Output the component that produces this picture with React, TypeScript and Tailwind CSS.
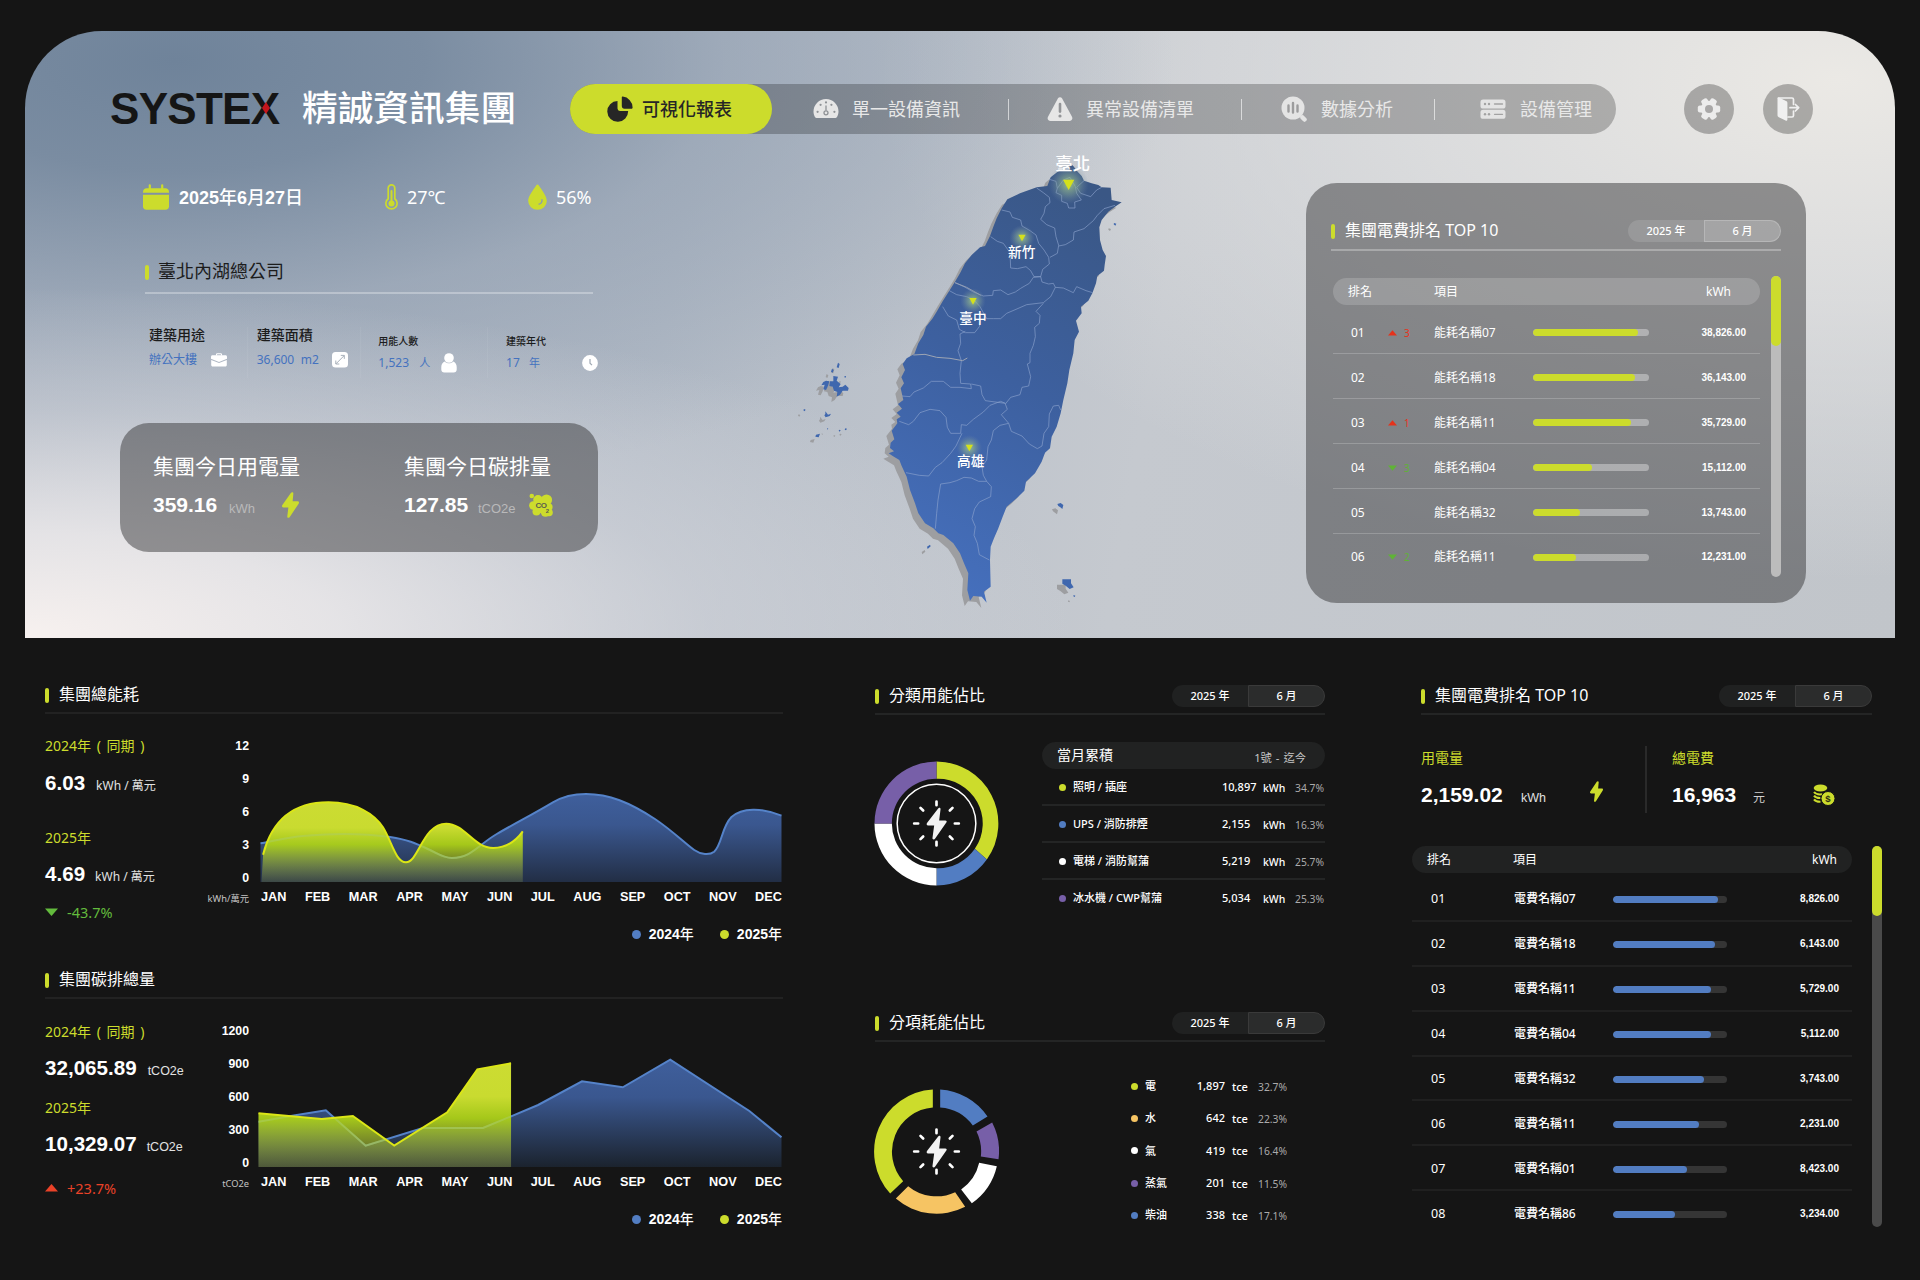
import React from "react";

const NOTO = "font-['Noto_Sans','Noto_Sans_CJK_TC',sans-serif]";
const ARIAL = "font-['Liberation_Sans','Noto_Sans_CJK_TC',sans-serif]";

/* ---------- icons ---------- */

function PieIcon() {
  return (
    <svg width="26" height="26" viewBox="0 0 26 26" fill="#262626">
      <path d="M10.5 5v7.6a2.4 2.4 0 0 0 2.4 2.4h8.2A10.4 10.4 0 1 1 10.5 5Z" />
      <path d="M15.8.6A11 11 0 0 1 25.6 11.4c0 .9-.5 1.3-1.3 1.3h-6.9c-1.6 0-2.6-1-2.6-2.6V1.6c0-.6.4-1 1-1Z" />
    </svg>
  );
}

function GaugeIcon() {
  return (
    <svg width="26" height="26" viewBox="0 0 26 26" fill="#e6e6e6">
      <path d="M3.4 22C1.6 22 .5 17.6.5 15.500a12.500 12.500 0 0 1 25 0c0 2.100-1.100 6.500-2.900 6.500Z" />
      <g fill="#8f9296">
        <circle cx="13" cy="6.400" r="1.100" />
        <circle cx="7.600" cy="8.800" r="1.100" />
        <circle cx="18.400" cy="8.800" r="1.100" />
        <circle cx="4.600" cy="15.800" r="1.100" />
        <circle cx="21.400" cy="15.800" r="1.100" />
      </g>
      <path d="M13 9.500v5" stroke="#8f9296" strokeWidth="1.300" />
      <circle cx="13" cy="16.800" r="2" fill="none" stroke="#8f9296" strokeWidth="1.300" />
    </svg>
  );
}

function WarningIcon() {
  return (
    <svg width="26" height="26" viewBox="0 0 26 26">
      <path
        d="M11 2.300 1 20.800c-1 1.900.2 4.200 2.300 4.200h19.400c2.100 0 3.300-2.300 2.300-4.200L15 2.300a2.300 2.300 0 0 0-4 0Z"
        fill="#e6e6e6"
      />
      <path d="M13 8v7.600" stroke="#929497" strokeWidth="2.600" strokeLinecap="round" />
      <circle cx="13" cy="20" r="1.600" fill="#929497" />
    </svg>
  );
}

function AnalysisIcon() {
  return (
    <svg width="26" height="26" viewBox="0 0 26 26">
      <circle cx="12" cy="12" r="11.500" fill="#e4e4e4" />
      <path d="m21.500 21.500 2 2" stroke="#e4e4e4" strokeWidth="4.500" strokeLinecap="round" />
      <path d="M7.500 9.500v6M12 7v9.500M16.500 9.500v6" stroke="#9c9c9d" strokeWidth="2.400" strokeLinecap="round" />
    </svg>
  );
}

function ServerIcon() {
  return (
    <svg width="26" height="26" viewBox="0 0 26 26">
      <rect x=".5" y="3.500" width="25" height="9" rx="2.600" fill="#e4e4e4" />
      <rect x=".5" y="13.800" width="25" height="9" rx="2.600" fill="#e4e4e4" />
      <g fill="#a2a2a2">
        <circle cx="5" cy="8" r="1.200" />
        <circle cx="9" cy="8" r="1.200" />
        <circle cx="5" cy="18.300" r="1.200" />
        <circle cx="9" cy="18.300" r="1.200" />
      </g>
      <path d="M14.500 8h8M14.500 18.300h8" stroke="#a2a2a2" strokeWidth="1.300" strokeLinecap="round" />
    </svg>
  );
}

function GearIcon() {
  return (
    <svg width="24" height="24" viewBox="-12 -12 24 24">
      <g fill="#ececec">
        <circle r="8.200" />
        {[0, 60, 120].map((a) => (
          <rect key={a} x="-11.200" y="-3.400" width="22.400" height="6.800" rx="2" transform={`rotate(${a})`} />
        ))}
      </g>
      <circle r="4" fill="#a9a8a8" />
    </svg>
  );
}

function ExitIcon() {
  return (
    <svg width="24" height="26" viewBox="0 0 24 26" fill="none" stroke="#f0f0f0" strokeLinejoin="round" strokeLinecap="round">
      <path d="M2.500 2h13.500c.9 0 1.500.6 1.500 1.500v5M17.500 15v4.500c0 .9-.6 1.500-1.500 1.500h-4" strokeWidth="1.700" />
      <path d="M1.500 2.500c0-.8.700-1.300 1.500-.9L10 5c.9.4 1.400 1.100 1.400 2v16.500c0 1-.9 1.600-1.800 1.100L2.800 21.200c-.8-.4-1.300-1-1.300-1.900Z" fill="#f0f0f0" strokeWidth="0" />
      <path d="M14 11.700h8.500M19.400 8.500l3.300 3.200-3.300 3.300" strokeWidth="1.700" />
    </svg>
  );
}

function CalendarIcon() {
  return (
    <svg width="26" height="26" viewBox="0 0 26 26" fill="#ccdc2c">
      <path d="M0 8.200C0 5.600 1.400 4.200 4 4.200h18c2.600 0 4 1.400 4 4v.6H0Z" />
      <path d="M0 10.800h26v11.400c0 2.200-1.200 3.600-3.600 3.600H3.600C1.200 25.800 0 24.400 0 22.200Z" />
      <path d="M6.800 1.300v4M19.200 1.300v4" stroke="#ccdc2c" strokeWidth="2.200" strokeLinecap="round" />
    </svg>
  );
}

function ThermoIcon() {
  return (
    <svg width="13" height="26" viewBox="0 0 13 26" fill="none" stroke="#ccdc2c">
      <path d="M3.200 14.800V4.200a3.300 3.300 0 0 1 6.600 0v10.600a5.600 5.600 0 1 1-6.600 0Z" strokeWidth="1.700" />
      <path d="M6.500 7v11" strokeWidth="2" strokeLinecap="round" />
      <circle cx="6.500" cy="19.400" r="3" fill="#ccdc2c" stroke="none" />
    </svg>
  );
}

function DropIcon() {
  return (
    <svg width="19" height="26" viewBox="0 0 19 26">
      <path d="M9.500.5c.5 0 .8.3 1 .6C14.500 7 18.800 12.500 18.800 17a9.300 8.700 0 0 1-18.600 0C.2 12.500 4.500 7 8.500 1.100c.2-.3.5-.6 1-.6Z" fill="#ccdc2c" />
      <path d="M14 15.600c.2 2.200-.8 4-3 4.600" fill="none" stroke="#8b9bb0" strokeWidth="1.300" strokeLinecap="round" />
    </svg>
  );
}

function BoltIcon({ w, h }: { w: number; h: number }) {
  return (
    <svg width={w} height={h} viewBox="0 0 48 76" fill="#ccdc2c" preserveAspectRatio="none">
      <path d="M25 3C27-1 33 0 32 5L30 27H44C48 27 49 31 47 34L22 73C19 77 14 76 15 71L18 45H4C0 45-1 41 1 38Z" />
    </svg>
  );
}

function Co2Icon() {
  return (
    <svg width="24" height="25" viewBox="0 0 24 25">
      <g fill="#ccdc2c">
        <circle cx="2.800" cy="3" r="2.300" />
        <circle cx="9" cy="6.800" r="4.800" />
        <circle cx="17.500" cy="7" r="5.600" />
        <circle cx="4.300" cy="12.500" r="4.200" />
        <circle cx="19.800" cy="14" r="3.800" />
        <circle cx="7.500" cy="18.500" r="4" />
        <circle cx="16.500" cy="19" r="4.800" />
        <circle cx="20" cy="19.500" r="3.800" />
        <rect x="6" y="6" width="14" height="14" />
      </g>
      <text x="6.400" y="15.200" fontSize="8" fontWeight="700" fill="#5b5e4c" className={ARIAL} textLength="11.500">CO</text>
      <text x="16.800" y="19.800" fontSize="6" fontWeight="700" fill="#5b5e4c" className={ARIAL}>2</text>
    </svg>
  );
}

function BriefcaseIcon() {
  return (
    <svg width="16" height="14" viewBox="0 0 16 14">
      <path d="M5.500 2.500V1.600c0-.5.300-.8.800-.8h3.400c.5 0 .8.300.8.800v.9" fill="none" stroke="#fff" strokeWidth="1.100" />
      <path d="M1.500 2.300h13c.9 0 1.500.6 1.500 1.500v1.900L8 9 0 5.700V3.800c0-.9.600-1.500 1.500-1.500Z" fill="#fff" />
      <path d="M.2 7 8 10.100 15.800 7v5c0 .9-.6 1.500-1.500 1.500H1.700c-.9 0-1.500-.6-1.500-1.500Z" fill="#fff" />
    </svg>
  );
}

function AreaIcon() {
  return (
    <svg width="16" height="16" viewBox="0 0 16 16">
      <rect width="16" height="15.500" rx="3.500" fill="#fff" />
      <path d="m4 11.800 8.200-8.200M8.800 3.400h3.500v3.500M3.800 8.500V12h3.500" fill="none" stroke="#9fa8b3" strokeWidth=".9" />
    </svg>
  );
}

function PersonIcon() {
  return (
    <svg width="16" height="20" viewBox="0 0 16 20" fill="#fff">
      <circle cx="8" cy="5" r="4.800" />
      <path d="M3.500 8.500C1.500 9.500.3 11.500.3 14v2.500c0 1.700 1.200 3 3 3h9.400c1.800 0 3-1.300 3-3V14c0-2.500-1.200-4.500-3.200-5.500-2.400 2.400-6.600 2.400-9 0Z" />
    </svg>
  );
}

function ClockIcon() {
  return (
    <svg width="16" height="16" viewBox="0 0 16 16">
      <circle cx="8" cy="8" r="7.900" fill="#fff" />
      <path d="M8 4v4.200l2 2" fill="none" stroke="#9fa8b3" strokeWidth="1.200" />
    </svg>
  );
}

function CoinsIcon() {
  return (
    <svg width="22" height="22" viewBox="0 0 22 22">
      <ellipse cx="7.500" cy="4" rx="6.800" ry="3.500" fill="#ccdc2c" />
      <g fill="none" stroke="#ccdc2c" strokeWidth="2">
        <path d="M1 8c1.500 2 4.500 2.700 8 2.300" />
        <path d="M1 11.700c1.200 1.700 3.500 2.500 6.500 2.400" />
        <path d="M1 15.300c1.200 1.700 3.500 2.500 6.500 2.400" />
      </g>
      <circle cx="15" cy="14.500" r="7" fill="#ccdc2c" stroke="#151515" strokeWidth="1" />
      <text x="15" y="18" fontSize="9.500" fontWeight="700" textAnchor="middle" fill="#2c2f10" className={ARIAL}>$</text>
    </svg>
  );
}

/* Energy symbol drawn at the middle of both rings. */
function RingCore() {
  return (
    <g>
      <g stroke="#fff" strokeWidth="8" strokeLinecap="round">
        <path d="M0-66v11M0 55v11M-67 0h12M55 0h12M-48-47l8 8M48-47l-8 8M-48 47l8-8M48 47l-8-8" />
      </g>
      <path d="M5-45C8-49 13-47 12-42L8-9H26C31-9 32-5 29-2L-4 45C-7 50-13 48-12 43L-7 6H-25C-30 6-31 2-28-2Z" fill="#f3f3f3" />
    </g>
  );
}

/* ---------- shared pieces ---------- */

function SectionTitle({ children }: { children: React.ReactNode }) {
  return (
    <div className="flex h-[22px] items-center">
      <span className="h-[15px] w-1 rounded-full bg-[#ccdc2c]" />
      <span className={`-mt-[2px] ml-[10px] text-[16px] leading-[22px] whitespace-nowrap text-white ${NOTO}`}>{children}</span>
    </div>
  );
}

function PeriodToggle({ light = false }: { light?: boolean }) {
  return (
    <div className={`flex h-[22px] w-[153px] text-[11px] leading-[21px] font-medium text-white ${NOTO}`}>
      <span className={`w-[76px] rounded-l-full text-center ${light ? "bg-white/12" : "bg-[#202121]"}`}>2025 年</span>
      <span
        className={`w-[77px] rounded-r-full border text-center leading-[20px] ${
          light ? "border-white/20 bg-white/22" : "border-[#3a3a3a] bg-[#2b2c2c]"
        }`}
      >
        6 月
      </span>
    </div>
  );
}

function Scrollbar({ track, height, thumb }: { track: string; height: string; thumb: string }) {
  return (
    <div className={`w-[10px] rounded-full ${track} ${height}`}>
      <div className={`w-[10px] rounded-full bg-[#ccdc2c] ${thumb}`} />
    </div>
  );
}

/* ---------- header ---------- */

function Header() {
  const idle = "flex items-center text-[18px] leading-[26px] text-[#e8e8e8]";
  return (
    <header className={`flex h-[50px] items-center pl-[85px] ${NOTO}`}>
      <div className="relative w-[192px]">
        <span className={`text-[44px] leading-[50px] font-bold tracking-[-0.7px] text-[#151515] ${ARIAL}`}>SYSTEX</span>
        <svg className="absolute top-[18px] left-[152px]" width="8" height="12" viewBox="0 0 8 12">
          <path d="M4 0 8 6 4 12 0 6Z" fill="#c4161c" />
        </svg>
      </div>
      <div className="-mt-[4px] w-[268px] text-[35.700px] leading-[50px] font-medium whitespace-nowrap text-white">精誠資訊集團</div>
      <nav className="flex h-[50px] w-[1046px] items-center rounded-full bg-black/24">
        <div className="flex h-[50px] w-[202px] items-center rounded-full bg-[#ccdc2c] pl-[37px] text-[18px] leading-[26px] font-medium text-[#262626]">
          <PieIcon />
          <span className="ml-[9px]">可視化報表</span>
        </div>
        <div className={`${idle} w-[236px] pl-[41px]`}>
          <GaugeIcon />
          <span className="ml-[13px]">單一設備資訊</span>
        </div>
        <span className="h-[21px] w-px bg-white/60" />
        <div className={`${idle} w-[232px] pl-[38px]`}>
          <WarningIcon />
          <span className="ml-[13px]">異常設備清單</span>
        </div>
        <span className="h-[21px] w-px bg-white/60" />
        <div className={`${idle} w-[192px] pl-[39px]`}>
          <AnalysisIcon />
          <span className="ml-[14px]">數據分析</span>
        </div>
        <span className="h-[21px] w-px bg-white/60" />
        <div className={`${idle} pl-[45px]`}>
          <ServerIcon />
          <span className="ml-[14px]">設備管理</span>
        </div>
      </nav>
      <button className="ml-[68px] flex size-[50px] items-center justify-center rounded-full bg-black/27">
        <GearIcon />
      </button>
      <button className="ml-[29px] flex size-[50px] items-center justify-center rounded-full bg-black/27">
        <ExitIcon />
      </button>
    </header>
  );
}

/* ---------- hero: building facts ---------- */

function BuildingInfo() {
  const big = "h-[18px] text-[14px] leading-[16px] font-medium text-[#1c1c1c]";
  const small = "h-[18px] text-[10px] leading-[17px] font-medium text-[#1c1c1c]";
  const value = "flex h-5 items-center text-[12px] leading-5 text-[#4472bf]";
  return (
    <section className={`ml-[95px] w-[478px] ${NOTO}`}>
      <div className="mt-[45px] flex h-9 items-center pl-[23px] text-[18px] leading-9 text-white">
        <CalendarIcon />
        <span className={`ml-[10px] w-[206px] pt-px font-bold ${ARIAL}`}>
          2025<span className="font-medium">年</span>6<span className="font-medium">月</span>27
          <span className="font-medium">日</span>
        </span>
        <ThermoIcon />
        <span className="ml-[9px] w-[121px] text-[18px]">27℃</span>
        <DropIcon />
        <span className="ml-[9px] text-[18px]">56%</span>
      </div>

      <div className="mt-10 ml-[25px] flex h-[34px] items-center">
        <span className="h-[15px] w-1 rounded-full bg-[#ccdc2c]" />
        <span className="-mt-[2px] ml-[9px] text-[18px] leading-[34px] text-[#1c1c1c]">臺北內湖總公司</span>
      </div>
      <div className="mt-[3px] ml-[25px] h-[2px] w-[448px] bg-white/30" />

      <div className="mt-[33px] ml-[29px] flex h-[51px]">
        <div className="w-[98px]">
          <div className={big}>建築用途</div>
          <div className={`${value} mt-[5px] w-[78px] justify-between`}>
            辦公大樓
            <BriefcaseIcon />
          </div>
        </div>
        <div className="w-[114px] border-l border-white/5 pl-[9px]">
          <div className={big}>建築面積</div>
          <div className={`${value} mt-[5px] w-[91px]`}>
            <span className="w-[44px]">36,600</span>
            <span>m2</span>
            <span className="ml-auto"><AreaIcon /></span>
          </div>
        </div>
        <div className="w-[127px] border-l border-white/5 pt-[6px] pl-[17px]">
          <div className={small}>用能人數</div>
          <div className={`${value} mt-[2px] w-[79px]`}>
            <span className="w-[41px]">1,523</span>
            <span className="text-[11px]">人</span>
            <span className="ml-auto"><PersonIcon /></span>
          </div>
        </div>
        <div className="w-[111px] border-l border-white/5 pt-[6px] pl-[18px]">
          <div className={small}>建築年代</div>
          <div className={`${value} mt-[2px] w-[92px]`}>
            <span className="w-[23px]">17</span>
            <span className="text-[11px]">年</span>
            <span className="ml-auto"><ClockIcon /></span>
          </div>
        </div>
      </div>

      <div className="mt-[45px] flex h-[129px] rounded-[29px] bg-[rgba(56,56,57,0.5)] pt-[29px] pl-[33px]">
        <div className="w-[251px]">
          <div className="text-[21px] leading-7 text-white">集團今日用電量</div>
          <div className={`mt-[10px] flex h-[30px] items-center ${ARIAL}`}>
            <span className="w-[76px] text-[21px] leading-[30px] font-bold text-white">359.16</span>
            <span className="w-[53px] pt-[7px] text-[13px] leading-4 text-[#b9b9ba]">kWh</span>
            <BoltIcon w={17} h={26} />
          </div>
        </div>
        <div>
          <div className="text-[21px] leading-7 text-white">集團今日碳排量</div>
          <div className={`mt-[10px] flex h-[30px] items-center ${ARIAL}`}>
            <span className="w-[74px] text-[21px] leading-[30px] font-bold text-white">127.85</span>
            <span className="w-[51px] pt-[7px] text-[13px] leading-4 text-[#b9b9ba]">tCO2e</span>
            <Co2Icon />
          </div>
        </div>
      </div>
    </section>
  );
}

/* ---------- hero: Taiwan map ---------- */

const COAST =
  "M866 80 878 76 893 95 905 108 912 122 935 130 955 135 965 142 992 143 995 180 1025 187 1005 200 985 215 965 240 958 262 960 300 968 330 978 348 974 375 972 392 952 408 948 430 937 460 925 482 903 500 905 520 888 542 897 575 884 600 880 640 868 690 862 730 850 780 842 820 830 860 815 890 810 925 795 938 785 965 765 1000 738 1025 733 1052 710 1075 680 1100 668 1130 655 1165 642 1195 632 1220 630 1260 632 1340 612 1355 620 1388 605 1370 580 1368 570 1382 562 1350 565 1300 552 1270 540 1240 520 1210 490 1185 475 1180 460 1165 435 1150 415 1120 405 1090 390 1050 380 1010 365 978 358 960 338 948 326 940 342 934 330 924 332 908 343 898 335 872 352 850 350 838 362 830 350 818 366 806 354 792 370 780 362 745 372 730 364 712 375 690 368 672 380 655 403 642 415 610 430 585 438 560 458 535 470 515 488 484 508 452 525 425 540 400 555 370 575 345 600 322 615 318 630 288 640 260 650 235 665 205 682 178 720 160 770 142 802 138 812 112 832 96Z";

const BORDERS = [
  "M665 210 690 216 697 232 722 240 726 258 750 272 768 285 776 310 792 330 806 352 808 372 788 388 782 410 760 412 748 430 722 445 706 456 684 464 662 450 640 452 638 466 610 468 578 455 552 440 525 428",
  "M808 118 828 124 832 145 828 158 845 166 845 184 862 190 866 204 885 204 884 186 904 180 890 160 886 140 870 112 850 120 832 145",
  "M770 144 790 158 808 172 810 188 796 200 792 220 782 238 800 254 824 264 828 290 836 316 832 340 810 352",
  "M836 318 856 314 880 300 882 276 912 266 940 242 952 226 972 206 1005 196",
  "M912 122 890 142 902 160 932 170 950 150 965 142",
  "M632 290 652 304 670 310 690 338 692 384 712 386 738 380 752 392 762 410 782 410 786 426 806 432 820 430 826 442 850 444 880 458 890 440 918 452 938 458",
  "M508 452 530 464 560 470 580 478 600 500 620 536 640 536 662 536 680 520 708 508 740 494 790 488 812 470 826 442",
  "M488 500 505 528 530 540 538 568 556 578 584 578 598 560 602 540",
  "M790 490 768 514 780 526 778 550 764 562 766 590 760 616 750 640 750 668 742 672 752 710 746 738 726 742 720 764 692 772 676 792",
  "M556 574 540 582 542 610 534 632 544 662 540 700 542 730 572 732 574 746 540 742 512 742 490 724 454 724 430 744 402 756 390 770 366 768",
  "M574 732 602 738 606 764 616 782 676 790 662 784 630 796 610 816 580 838 560 856 544 854 542 880 512 880 502 862 498 832 480 812 450 808 420 818 400 844 386 854 358 844",
  "M546 880 528 918 512 940 486 968 466 982 446 1008 418 1006 378 998",
  "M676 792 682 808 664 824 686 850 660 856 640 872 634 900 624 920 620 960 606 980 610 1006 620 1024 596 1024 574 1014 552 1012 530 1022 510 1028 482 1032 474 1080 470 1120 466 1166",
  "M686 850 694 874 726 888 748 912 772 926 786 918 792 880 806 860 808 822 820 798 836 796 842 810",
  "M620 1024 634 1040 632 1070 598 1086 584 1106 576 1136 586 1160 582 1186 592 1210 598 1244 628 1260",
];

const PLACES = [
  { name: "臺北", x: 878, y: 91, size: 52, px: 866, py: 133, tri: 17, glow: 60 },
  { name: "新竹", x: 725, y: 352, size: 41, px: 726, py: 293, tri: 11, glow: 38 },
  { name: "臺中", x: 579, y: 550, size: 41, px: 579, py: 483, tri: 11, glow: 38 },
  { name: "高雄", x: 572, y: 979, size: 41, px: 568, py: 923, tri: 11, glow: 38 },
];

const ISLANDS =
  "M160 708l14 2-4 12 12 10-6 10 12-2 8-6 10 10-2 8-16 0-8 12-10 6 2-14-10-4-4-12-10-2 2-14 10 0ZM138 722l10 2-4 14-6 12-8-2 4-14-10 2 6-10ZM174 668l5 4-3 12-6-2ZM156 686l5 4-3 8-5-3ZM136 814l8 10 9-3-4 7-12 4-4-6 3-4ZM108 884l12-3-4 11-10-2ZM72 807l5 2-3 5-4-3ZM194 708l4 0-1 5-4-1ZM178 869l4 2-3 4-3-3ZM196 865l5 1-3 5-4-2ZM141 864l4 2-3 3ZM832 1092l10-3 8 6-3 12-6-5-6-4ZM847 1318l26 0 0 12 8 12-12 5-12-10-10-6ZM881 1365l5 2-2 4-4-2ZM441 1220l9-6 2 5-9 8ZM1002 249l7 2-3 6-5-4Z";

function TaiwanMap() {
  return (
    <svg width="380" height="480" viewBox="0 0 1140 1440" className="mt-[6px] ml-[182px] shrink-0">
      <defs>
        <linearGradient id="land" x1="0.700" y1="0" x2="0.400" y2="1">
          <stop offset="0" stopColor="#3a5785" />
          <stop offset="0.500" stopColor="#3d609f" />
          <stop offset="1" stopColor="#456fbc" />
        </linearGradient>
        <radialGradient id="glow">
          <stop offset="0" stopColor="#a9cf86" stopOpacity="0.850" />
          <stop offset="0.500" stopColor="#86a894" stopOpacity="0.500" />
          <stop offset="1" stopColor="#6f86a8" stopOpacity="0" />
        </radialGradient>
      </defs>
      <g fill="#9d9ea1">
        <path d={COAST} transform="translate(-16 16)" />
        <path d={ISLANDS} transform="translate(-16 16)" />
      </g>
      <path d={ISLANDS} fill="#3f67ae" />
      <path d={COAST} fill="url(#land)" strokeLinejoin="round" />
      <g fill="none" stroke="#8ea4cf" strokeOpacity="0.750" strokeWidth="2.500" strokeLinejoin="round">
        {BORDERS.map((d) => (
          <path key={d} d={d} />
        ))}
      </g>
      <path d="M400 645 435 643 470 652 510 655 548 662 562 654" fill="none" stroke="#9da5b4" strokeWidth="3" />
      <path d="M525 428 560 442 585 456 602 466" fill="none" stroke="#9da5b4" strokeWidth="2.500" />
      {PLACES.map((p) => (
        <g key={p.name}>
          <circle cx={p.px} cy={p.py} r={p.glow} fill="url(#glow)" />
          <path
            d={`M${p.px - p.tri} ${p.py - p.tri * 0.8}h${p.tri * 2}l${-p.tri} ${p.tri * 1.8}Z`}
            fill="#d4e11c"
          />
          <text x={p.x} y={p.y} fontSize={p.size} textAnchor="middle" fill="#fff" className={`${NOTO} font-medium`}>
            {p.name}
          </text>
        </g>
      ))}
    </svg>
  );
}

/* ---------- hero: ranking card ---------- */

const COST_RANK = [
  { rank: "01", move: 3, name: "能耗名稱07", pct: 90.5, value: "38,826.00" },
  { rank: "02", move: 0, name: "能耗名稱18", pct: 87.5, value: "36,143.00" },
  { rank: "03", move: 1, name: "能耗名稱11", pct: 84.8, value: "35,729.00" },
  { rank: "04", move: -3, name: "能耗名稱04", pct: 50.7, value: "15,112.00" },
  { rank: "05", move: 0, name: "能耗名稱32", pct: 40.3, value: "13,743.00" },
  { rank: "06", move: -2, name: "能耗名稱11", pct: 37.2, value: "12,231.00" },
];

function Move({ n }: { n: number }) {
  if (n === 0) return null;
  const up = n > 0;
  return (
    <span className={`flex items-center text-[10px] leading-4 ${up ? "text-[#e5321b]" : "text-[#5fb336]"}`}>
      <svg width="9" height="6" viewBox="0 0 9 6" fill="currentColor">
        <path d={up ? "M4.500.3 9 5.500H0Z" : "M0 .5h9L4.500 5.700Z"} />
      </svg>
      <span className="ml-[7px]">{Math.abs(n)}</span>
    </span>
  );
}

function RankCard() {
  return (
    <section className={`mt-[49px] ml-[146px] h-[420px] w-[500px] shrink-0 rounded-[31px] bg-[rgba(56,56,57,0.5)] px-[25px] pt-[37px] text-white ${NOTO}`}>
      <div className="flex h-[22px] items-center justify-between">
        <SectionTitle>集團電費排名 TOP 10</SectionTitle>
        <PeriodToggle light />
      </div>
      <div className="mt-[7px] h-[2px] bg-white/28" />
      <div className="mt-[25px] flex justify-between pl-[2px]">
        <div className="w-[427px] pt-[2px]">
          <div className="flex h-[27px] items-center rounded-full bg-white/17 text-[12px] leading-[27px]">
            <span className="w-[86px] pl-[15px]">排名</span>
            <span className="pl-[15px]">項目</span>
            <span className="mr-[29px] ml-auto">kWh</span>
          </div>
          <div className="pt-1">
            {COST_RANK.map((r) => (
              <div key={r.rank} className="flex h-[45px] items-center border-b-[1.500px] border-white/20 pt-[3px] text-[12px] leading-4 last:border-transparent last:pt-[2px]">
                <span className="w-[55px] pl-[18px]">{r.rank}</span>
                <span className="w-[46px]"><Move n={r.move} /></span>
                <span className="w-[99px]">{r.name}</span>
                <span className="h-[7px] w-[116px] overflow-hidden rounded-full bg-white/35">
                  <span className="block h-full rounded-full bg-[#ccdc2c]" style={{ width: `${r.pct}%` }} />
                </span>
                <span className={`mr-[14px] ml-auto text-[10px] font-bold ${ARIAL}`}>{r.value}</span>
              </div>
            ))}
          </div>
        </div>
        <Scrollbar track="bg-[#bcbcbc]" height="h-[301px]" thumb="h-[70px]" />
      </div>
    </section>
  );
}

/* ---------- trend panels ---------- */

const MONTHS = ["JAN", "FEB", "MAR", "APR", "MAY", "JUN", "JUL", "AUG", "SEP", "OCT", "NOV", "DEC"];

type Trend = {
  id: string;
  title: string;
  unit: string;
  axisUnit: string;
  last: string;
  current: string;
  change: string;
  up: boolean;
  ticks: string[];
  viewBox: string;
  base: number;
  blue: string;
  blueSpan: [number, number];
  lime: string;
  limeSpan: [number, number];
  blueTop: number;
  limeTop: number;
  limeFloor: number;
  gaps: string[];
};

const ENERGY: Trend = {
  id: "energy",
  title: "集團總能耗",
  unit: "kWh / 萬元",
  axisUnit: "kWh/萬元",
  last: "6.03",
  current: "4.69",
  change: "-43.7%",
  up: false,
  ticks: ["12", "9", "6", "3", "0"],
  viewBox: "511 330 1023 339",
  base: 669,
  blue: "M512 553C540 545 560 535 600 530C660 522 720 524 766 534C800 542 815 552 840 570C860 584 870 597 887 597C925 597 940 556 975 525C1010 494 1050 462 1085 430C1105 412 1125 405 1150 405C1195 405 1235 430 1285 480C1320 516 1345 555 1362 573C1375 587 1392 589 1401 578C1417 556 1415 505 1435 474C1455 446 1495 445 1533 470",
  blueSpan: [512, 1533],
  lime: "M517 587C530 510 560 430 645 430C700 430 735 465 752 505C770 550 777 610 797 610C822 610 830 494 876 494C912 494 930 567 968 567C990 567 1008 555 1026 517",
  limeSpan: [514, 1026],
  blueTop: 405,
  limeTop: 430,
  limeFloor: 0.22,
  gaps: ["mt-[20px]", "mt-[13px]", "mt-[31px]", "mt-[12px]", "mt-[14px]"],
};

const CARBON: Trend = {
  id: "carbon",
  title: "集團碳排總量",
  unit: "tCO2e",
  axisUnit: "tCO2e",
  last: "32,065.89",
  current: "10,329.07",
  change: "+23.7%",
  up: true,
  ticks: ["1200", "900", "600", "300", "0"],
  viewBox: "511 315 1023 339",
  base: 654,
  blue: "M508 518 580 499 640 484 718 590 830 537 948 537 1003 502 1056 468 1142 397 1222 415 1315 332 1470 486 1533 565",
  blueSpan: [508, 1533],
  lime: "M508 493 632 510 693 501 774 590 878 490 937 361 1003 343",
  limeSpan: [508, 1003],
  blueTop: 332,
  limeTop: 343,
  limeFloor: 0.4,
  gaps: ["mt-[21px]", "mt-[12px]", "mt-[16px]", "mt-[12px]", "mt-[20px]"],
};

function TrendPanel({ t }: { t: Trend }) {
  const label = "h-6 text-[14px] leading-6 text-[#ccdc2c] whitespace-pre";
  const figure = "flex h-6 items-center";
  const unitFont = t.up ? `text-[12.500px] ${ARIAL}` : "text-[12px]";
  return (
    <section className={`h-[285px] w-[738px] ${NOTO}`}>
      <SectionTitle>{t.title}</SectionTitle>
      <div className="mt-[6px] h-[2px] bg-[#222]" />
      <div className="flex">
        <div className="w-[163px]">
          <div className={`${label} ${t.gaps[0]}`}>
            2024年<span className="[word-spacing:2px]"> ( 同期 )</span>
          </div>
          <div className={`${figure} ${t.gaps[1]}`}>
            <span className={`text-[20.600px] leading-6 font-bold text-white ${ARIAL}`}>{t.last}</span>
            <span className={`ml-[11px] pt-[5px] leading-5 whitespace-nowrap text-[#e2e2e2] ${unitFont}`}>{t.unit}</span>
          </div>
          <div className={`${label} ${t.gaps[2]}`}>2025年</div>
          <div className={`${figure} ${t.gaps[3]}`}>
            <span className={`text-[20.600px] leading-6 font-bold text-white ${ARIAL}`}>{t.current}</span>
            <span className={`ml-[10px] pt-[5px] leading-5 whitespace-nowrap text-[#e2e2e2] ${unitFont}`}>{t.unit}</span>
          </div>
          <div className={`flex h-6 items-center text-[14.500px] leading-6 ${t.gaps[4]} ${t.up ? "text-[#ea4228]" : "text-[#63bb3d]"}`}>
            <svg width="13" height="8" viewBox="0 0 13 8" fill="currentColor">
              <path d={t.up ? "M6.500 0 13 7.500H0Z" : "M0 .5h13L6.500 8Z"} />
            </svg>
            <span className="ml-[9px]">{t.change}</span>
          </div>
        </div>
        <div className={`w-[41px] pt-[16px] text-right ${ARIAL}`}>
          {t.ticks.map((k) => (
            <div key={k} className="h-[33px] text-[12.300px] leading-[33px] font-bold text-white">{k}</div>
          ))}
          <div className={`-mt-[6px] ml-[-10px] text-[9.300px] leading-[20px] whitespace-nowrap text-[#c4c4c4] ${NOTO}`}>{t.axisUnit}</div>
        </div>
        <div className="ml-[11px] w-[522px]">
          <svg width="522" height="113" viewBox={t.viewBox} preserveAspectRatio="none" className="mt-[55px] block overflow-visible">
            <defs>
              <linearGradient id={`${t.id}-blue`} gradientUnits="userSpaceOnUse" x1="0" x2="0" y1={t.blueTop} y2={t.base}>
                <stop offset="0" stopColor="#3f5f9c" />
                <stop offset="0.350" stopColor="#3a578f" />
                <stop offset="1" stopColor={t.up ? "#1b232e" : "#222e45"} />
              </linearGradient>
              <linearGradient id={`${t.id}-lime`} gradientUnits="userSpaceOnUse" x1="0" x2="0" y1={t.limeTop} y2={t.base}>
                <stop offset="0" stopColor="#ccdc32" />
                <stop offset="0.320" stopColor="#c9db30" />
                <stop offset="0.530" stopColor="#abcf1a" stopOpacity="0.960" />
                <stop offset="1" stopColor="#9aa84a" stopOpacity={t.limeFloor} />
              </linearGradient>
              <clipPath id={`${t.id}-clip`}>
                <path d={`${t.lime}V${t.base}H${t.limeSpan[0]}Z`} />
              </clipPath>
            </defs>
            <path d={`${t.blue}V${t.base}H${t.blueSpan[0]}Z`} fill={`url(#${t.id}-blue)`} />
            <path d={t.blue} fill="none" stroke="#5583c9" strokeWidth="2" vectorEffect="non-scaling-stroke" />
            <path d={`${t.lime}V${t.base}H${t.limeSpan[0]}Z`} fill={`url(#${t.id}-lime)`} />
            <path d={t.blue} fill="none" stroke="#a9c96a" strokeOpacity="0.450" strokeWidth="2" vectorEffect="non-scaling-stroke" clipPath={`url(#${t.id}-clip)`} />
            <path d={t.lime} fill="none" stroke="#dbe616" strokeWidth="2" vectorEffect="non-scaling-stroke" />
          </svg>
          <div className={`mt-[5px] flex h-5 justify-between pl-px text-[12.700px] leading-5 font-bold text-white ${ARIAL}`}>
            {MONTHS.map((m) => (
              <span key={m}>{m}</span>
            ))}
          </div>
          <div className={`mt-[17px] flex h-5 items-center justify-end text-[14px] leading-5 font-bold text-white ${ARIAL}`}>
            <span className="size-[9px] rounded-full bg-[#527dc2]" />
            <span className="ml-2">2024<span className="font-medium">年</span></span>
            <span className="ml-[26px] size-[9px] rounded-full bg-[#ccdc2c]" />
            <span className="ml-2">2025<span className="font-medium">年</span></span>
          </div>
        </div>
      </div>
    </section>
  );
}

/* ---------- share panels ---------- */

const USAGE = [
  { dot: "bg-[#ccdc2c]", name: "照明 / 插座", value: "10,897", pct: "34.7%" },
  { dot: "bg-[#527dc2]", name: "UPS / 消防排煙", value: "2,155", pct: "16.3%" },
  { dot: "bg-white", name: "電梯 / 消防幫蒲", value: "5,219", pct: "25.7%" },
  { dot: "bg-[#775fa8]", name: "冰水機 / CWP幫蒲", value: "5,034", pct: "25.3%" },
];

const SOURCES = [
  { dot: "bg-[#ccdc2c]", name: "電", value: "1,897", pct: "32.7%" },
  { dot: "bg-[#f6c463]", name: "水", value: "642", pct: "22.3%" },
  { dot: "bg-white", name: "氣", value: "419", pct: "16.4%" },
  { dot: "bg-[#775fa8]", name: "蒸氣", value: "201", pct: "11.5%" },
  { dot: "bg-[#527dc2]", name: "柴油", value: "338", pct: "17.1%" },
];

function UsageRing() {
  return (
    <svg width="125" height="125" viewBox="-187.500 -187.500 375 375" className="mt-[46px] mr-px -ml-px shrink-0">
      <path d="M0-186A186 186 0 0 1 151 108L115 76A134 134 0 0 0 0-134Z" fill="#ccdc2c" />
      <path d="M151 108A186 186 0 0 1 0 186V134A134 134 0 0 0 115 76Z" fill="#527dc2" />
      <path d="M0 186A186 186 0 0 1-186 0H-134A134 134 0 0 0 0 134Z" fill="#fff" />
      <path d="M-186 0A186 186 0 0 1 0-186V-134A134 134 0 0 0-134 0Z" fill="#775fa8" />
      <circle r="118" fill="none" stroke="#fff" strokeWidth="4.500" />
      <RingCore />
    </svg>
  );
}

function SourceRing() {
  return (
    <svg width="125" height="125" viewBox="72.500 299.500 375 375" className="mt-[47px] mr-px -ml-px shrink-0">
      <path d="M271 301A186 186 0 0 1 413 382L369 409A133 133 0 0 0 271 355Z" fill="#527dc2" />
      <path d="M427 400A187 187 0 0 1 446 510L393 502A133 133 0 0 0 380 427Z" fill="#775fa8" />
      <path d="M441 531A187 187 0 0 1 366 642L334 601A133 133 0 0 0 388 521Z" fill="#fff" />
      <path d="M346 653A187 187 0 0 1 138 628L175 591A133 133 0 0 0 316 609Z" fill="#f6c463" />
      <path d="M121 613A187 187 0 0 1 249 301V355A133 133 0 0 0 160 576Z" fill="#ccdc2c" />
      <g transform="translate(260 487)">
        <RingCore />
      </g>
    </svg>
  );
}

function SharePanels() {
  return (
    <div className={`w-[450px] text-white ${NOTO}`}>
      <section className="h-[327px]">
        <div className="flex h-[22px] items-center justify-between">
          <SectionTitle>分類用能佔比</SectionTitle>
          <PeriodToggle />
        </div>
        <div className="mt-[6px] h-[2px] bg-[#242525]" />
        <div className="flex">
          <UsageRing />
          <div className="mt-[27px] ml-[42px] w-[283px]">
            <div className="flex h-[27px] items-center justify-between rounded-full bg-[#212222] pr-[19px] pl-[15px]">
              <span className="-mt-[2px] text-[14px] leading-[27px]">當月累積</span>
              <span className="pt-1 text-[11.300px] leading-5 text-[#c6c6c6] [word-spacing:1px]">1號 - 迄今</span>
            </div>
            {USAGE.map((u) => (
              <div key={u.name} className="flex h-[37px] items-center border-b-2 border-[#242525] pt-px pl-[17px] text-[11px] leading-4 font-medium last:border-transparent">
                <span className={`size-[7px] rounded-full ${u.dot}`} />
                <span className="ml-[7px] w-[149px] whitespace-nowrap">{u.name}</span>
                <span className="w-[41px]">{u.value}</span>
                <span className="w-[32px] pt-px text-[10.500px]">kWh</span>
                <span className="pt-px text-[10.300px] font-normal text-[#ababab]">{u.pct}</span>
              </div>
            ))}
          </div>
        </div>
      </section>
      <section>
        <div className="flex h-[22px] items-center justify-between">
          <SectionTitle>分項耗能佔比</SectionTitle>
          <PeriodToggle />
        </div>
        <div className="mt-[6px] h-[2px] bg-[#242525]" />
        <div className="flex">
          <SourceRing />
          <div className="mt-[28px] ml-[131px]">
            {SOURCES.map((s) => (
              <div key={s.name} className="flex h-[32.300px] items-center text-[11px] leading-4 font-medium">
                <span className={`size-[7px] rounded-full ${s.dot}`} />
                <span className="ml-[7px] w-[39px]">{s.name}</span>
                <span className="w-[41px] text-right">{s.value}</span>
                <span className="ml-[7px] w-[26px] pt-px">tce</span>
                <span className="pt-px text-[10.300px] font-normal text-[#ababab]">{s.pct}</span>
              </div>
            ))}
          </div>
        </div>
      </section>
    </div>
  );
}

/* ---------- bill ranking panel ---------- */

const BILL_RANK = [
  { rank: "01", name: "電費名稱07", pct: 91.7, value: "8,826.00" },
  { rank: "02", name: "電費名稱18", pct: 89.6, value: "6,143.00" },
  { rank: "03", name: "電費名稱11", pct: 85.7, value: "5,729.00" },
  { rank: "04", name: "電費名稱04", pct: 85.7, value: "5,112.00" },
  { rank: "05", name: "電費名稱32", pct: 79.7, value: "3,743.00" },
  { rank: "06", name: "電費名稱11", pct: 75, value: "2,231.00" },
  { rank: "07", name: "電費名稱01", pct: 65, value: "8,423.00" },
  { rank: "08", name: "電費名稱86", pct: 54.3, value: "3,234.00" },
];

function BillPanel() {
  return (
    <section className={`w-[470px] text-white ${NOTO}`}>
      <div className="ml-[9px] w-[451px]">
        <div className="flex h-[22px] items-center justify-between">
          <SectionTitle>集團電費排名 TOP 10</SectionTitle>
          <PeriodToggle />
        </div>
        <div className="mt-[6px] h-[2px] bg-[#242525]" />
        <div className="mt-[31px] flex h-[67px]">
          <div className="w-[226px] border-r-2 border-[#2a2a2a] pt-[2px]">
            <div className="text-[14px] leading-5 text-[#ccdc2c]">用電量</div>
            <div className={`mt-[14px] flex h-[26px] items-center ${ARIAL}`}>
              <span className="w-[100px] text-[21px] leading-[26px] font-bold">2,159.02</span>
              <span className="w-[69px] pt-[5px] text-[12.500px] leading-4 text-[#e0e0e0]">kWh</span>
              <span className="-mt-2"><BoltIcon w={13} h={21} /></span>
            </div>
          </div>
          <div className="pt-[2px] pl-[25px]">
            <div className="text-[14px] leading-5 text-[#ccdc2c]">總電費</div>
            <div className={`mt-[14px] flex h-[26px] items-center ${ARIAL}`}>
              <span className="w-[81px] text-[21px] leading-[26px] font-bold">16,963</span>
              <span className={`w-[60px] pt-[5px] text-[12px] leading-4 text-[#cfcfcf] ${NOTO}`}>元</span>
              <CoinsIcon />
            </div>
          </div>
        </div>
      </div>
      <div className="mt-[33px] flex justify-between">
        <div className="w-[440px]">
          <div className="flex h-[27px] items-center rounded-full bg-[#212222] text-[12px] leading-[27px]">
            <span className="w-[101px] pl-[15px]">排名</span>
            <span>項目</span>
            <span className="mr-[15px] ml-auto">kWh</span>
          </div>
          <div className="pt-1">
            {BILL_RANK.map((r) => (
              <div key={r.rank} className="flex h-[44.900px] items-center border-b-2 border-[#202020] pt-[2px] text-[12.500px] leading-4 last:border-transparent">
                <span className="w-[102px] pl-[19px]">{r.rank}</span>
                <span className="w-[99px] text-[12px] font-medium">{r.name}</span>
                <span className="mt-px h-[7px] w-[114px] overflow-hidden rounded-full bg-[#353535]">
                  <span className="block h-full rounded-full bg-[#527dc2]" style={{ width: `${r.pct}%` }} />
                </span>
                <span className={`mr-[13px] ml-auto text-[10px] font-bold ${ARIAL}`}>{r.value}</span>
              </div>
            ))}
          </div>
        </div>
        <Scrollbar track="bg-[#4a4a4a]" height="h-[381px]" thumb="h-[70px]" />
      </div>
    </section>
  );
}

export default function App() {
  return (
    <div className="h-[1280px] w-[1920px] overflow-hidden bg-[#151515] px-[25px] pt-[31px]">
      <div className="h-[607px] w-[1870px] rounded-t-[77px] bg-[radial-gradient(ellipse_1050px_350px_at_0%_100%,#f7f1ef_0%,rgba(238,235,236,0.85)_30%,rgba(216,217,222,0.5)_65%,rgba(200,203,211,0)_100%),radial-gradient(ellipse_1000px_440px_at_8%_5%,#6f839a_0%,rgba(117,136,158,0.9)_25%,rgba(140,155,174,0.55)_55%,rgba(170,180,194,0)_100%),radial-gradient(ellipse_960px_500px_at_97%_8%,#ebe9e5_0%,rgba(226,226,226,0.75)_45%,rgba(205,208,212,0)_100%),linear-gradient(100deg,#aab3c0_0%,#b4bcc7_35%,#c5c9cf_60%,#c1c5ca_100%)] pt-[53px]">
        <Header />
        <div className="flex items-start">
          <BuildingInfo />
          <TaiwanMap />
          <RankCard />
        </div>
      </div>
      <main className="flex pl-5">
        <div className="mt-[46px]">
          <TrendPanel t={ENERGY} />
          <TrendPanel t={CARBON} />
        </div>
        <div className="mt-[47px] ml-[92px]">
          <SharePanels />
        </div>
        <div className="mt-[47px] ml-[87px]">
          <BillPanel />
        </div>
      </main>
    </div>
  );
}
